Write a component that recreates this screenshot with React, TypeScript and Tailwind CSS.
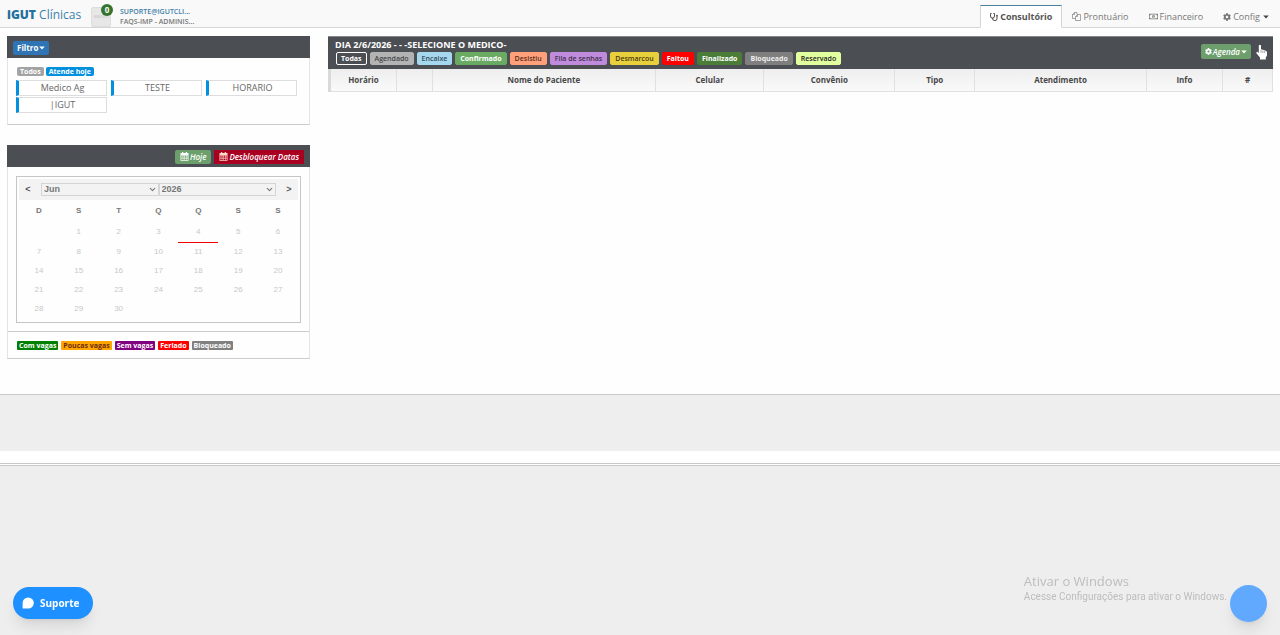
import React from "react";
import { ChevronDown } from "lucide-react";
import { FaCog, FaRegMoneyBillAlt, FaStethoscope } from "react-icons/fa";

const doctors = ["Medico Ag", "TESTE", "HORARIO", "|IGUT"];

const statuses = [
  { label: "Todas", style: "border-white bg-[#4b4e53] font-bold text-white" },
  { label: "Agendado", style: "border-[#b3b3b3] bg-[#b3b3b3] font-semibold text-[#444]" },
  { label: "Encaixe", style: "border-[#a5d8ee] bg-[#a5d8ee] font-semibold text-[#34495e]" },
  { label: "Confirmado", style: "border-[#6aab64] bg-[#6aab64] font-bold text-white" },
  { label: "Desistiu", style: "border-[#ffa07a] bg-[#ffa07a] font-semibold text-[#5a2d1a]" },
  { label: "Fila de senhas", style: "border-[#c08bdc] bg-[#c08bdc] font-semibold text-[#40304a]" },
  { label: "Desmarcou", style: "border-[#e8d03c] bg-[#e8d03c] font-semibold text-[#4a3a10]" },
  { label: "Faltou", style: "border-[#ff0000] bg-[#ff0000] font-bold text-white" },
  { label: "Finalizado", style: "border-[#4b7d38] bg-[#4b7d38] font-bold text-white" },
  { label: "Bloqueado", style: "border-[#7f7f7f] bg-[#7f7f7f] font-bold text-[#eee]" },
  { label: "Reservado", style: "border-[#e2ff9f] bg-[#e2ff9f] font-semibold text-[#222]" },
];

const columns = [
  { label: "Horário", width: "w-[7%]" },
  { label: "", width: "w-[3.8%]" },
  { label: "Nome do Paciente", width: "w-[23.7%]" },
  { label: "Celular", width: "w-[11.5%]" },
  { label: "Convênio", width: "w-[13.9%]" },
  { label: "Tipo", width: "w-[8.5%]" },
  { label: "Atendimento", width: "w-[18.2%]" },
  { label: "Info", width: "w-[8.1%]" },
  { label: "#", width: "w-[5.3%]" },
];

const legend = [
  { label: "Com vagas", style: "bg-[#008000] text-white" },
  { label: "Poucas vagas", style: "bg-[#ffa500] text-[#6b2a10]" },
  { label: "Sem vagas", style: "bg-[#800080] text-white" },
  { label: "Feriado", style: "bg-[#ff0000] text-white" },
  { label: "Bloqueado", style: "bg-[#808080] text-white" },
];

const weekdays = ["D", "S", "T", "Q", "Q", "S", "S"];
const weeks = [0, 1, 2, 3, 4].map((week) =>
  weekdays.map((_, day) => {
    const date = week * 7 + day;
    return date >= 1 && date <= 30 ? date : null;
  }),
);

function Caret({ className = "" }: { className?: string }) {
  return (
    <svg viewBox="0 0 6 4" className={`h-1 w-[6px] ${className}`} fill="currentColor" aria-hidden="true">
      <path d="M.2.5h5.6L3 3.6Z" />
    </svg>
  );
}

function CalendarIcon({ className = "" }: { className?: string }) {
  return (
    <svg viewBox="0 0 18 18" className={`h-[9px] w-[9px] ${className}`} fill="currentColor" aria-hidden="true">
      <path
        fillRule="evenodd"
        d="M4 0h2.5v2h5V0H14v2h3v15.500H1V2h3ZM2.500 7v2.500h3V7Zm4 0v2.500h2.200V7Zm3.200 0v2.500H12V7Zm3.300 0v2.500h2.500V7ZM2.500 10.500V13h3v-2.500Zm4 0V13h2.200v-2.500Zm3.200 0V13H12v-2.500Zm3.300 0V13h2.500v-2.500ZM2.500 14v2h3v-2Zm4 0v2h2.200v-2Zm3.200 0v2H12v-2Zm3.300 0v2h2.500v-2Z"
      />
    </svg>
  );
}

function FilesIcon() {
  return (
    <svg
      viewBox="0 0 18 18"
      className="h-[9px] w-[9px]"
      fill="none"
      stroke="currentColor"
      strokeWidth="1.3"
      strokeLinejoin="round"
      aria-hidden="true"
    >
      <path d="M7 13H1V5l4-4h5v4M5 1v4H1" />
      <path d="M11 5h6v12H7V9ZM11 5v4H7" />
    </svg>
  );
}

function Header() {
  return (
    <header className="flex h-7 justify-between border-b border-[#d5d5d5] bg-[#f9f9f9]">
      <div className="flex pl-[7px]">
        <a href="#inicio" className="mt-1 w-[84px] text-[12px] leading-[22px] whitespace-nowrap text-[#3d81ad]">
          <b className="font-extrabold text-[#24709f]">iGUT</b> Clínicas
        </a>
        <div className="relative mt-[7px] h-5 w-5 rounded-xs border border-[#ddd] bg-[#e7e7e7] text-center text-[3px] leading-[18px] text-[#bbb]">
          SEM FOTO
          <span className="absolute -top-1 -right-[3px] flex h-3 w-3 items-center justify-center rounded-full bg-[#35742d] text-[8px] leading-none font-bold text-white">
            0
          </span>
        </div>
        <div className="mt-[7px] ml-[9px] text-[7px] leading-[10px] font-semibold">
          <div className="text-[#3f7ea8]">SUPORTE@IGUTCLI...</div>
          <div className="text-[#777]">FAQS-IMP - ADMINIS...</div>
        </div>
      </div>
      <nav className="flex items-start pt-[5px] text-[9px] leading-[22px] text-[#777]">
        <a
          href="#consultorio"
          className="flex h-[23px] items-center gap-[2px] border border-t-[#4c7f9e] border-r-[#d5d5d5] border-b-white border-l-[#d5d5d5] bg-white px-[9px] font-bold text-[#555]"
        >
          <FaStethoscope className="h-2 w-2" />
          Consultório
        </a>
        <a href="#prontuario" className="flex h-[23px] items-center gap-[2px] pl-[10px]">
          <FilesIcon />
          Prontuário
        </a>
        <a href="#financeiro" className="flex h-[23px] items-center gap-[2px] pl-5">
          <FaRegMoneyBillAlt className="h-[9px] w-[9px]" />
          Financeiro
        </a>
        <a href="#config" className="flex h-[23px] items-center gap-[2px] pr-[11px] pl-5">
          <FaCog className="h-2 w-2" />
          Config
          <Caret className="ml-px text-[#444]" />
        </a>
      </nav>
    </header>
  );
}

function FilterPanel() {
  return (
    <section className="border border-t-0 border-[#e4e4e4] border-b-[#ccc]">
      <div className="-mx-px flex h-[22px] items-center bg-[#4b4e53] pt-[2px] pl-[6px]">
        <button className="flex h-[14px] items-center gap-px rounded-xs bg-[#2f74b5] px-1 text-[8px] font-bold text-white">
          Filtro
          <Caret />
        </button>
      </div>
      <div className="px-2 pt-[9px] pb-[11px]">
        <div className="flex gap-[2px] pl-px text-[7px] leading-[9px] font-bold text-white">
          <button className="rounded-xs bg-[#a3a3a3] px-[3px]">Todos</button>
          <button className="rounded-xs bg-[#0090dd] px-[3px]">Atende hoje</button>
        </div>
        <div className="mt-[4px] grid grid-cols-3 gap-x-1 gap-y-px pr-1">
          {doctors.map((name) => (
            <button
              key={name}
              className="h-4 border border-l-3 border-[#ddd] border-l-[#0090dd] bg-white text-[9px] leading-[14px] text-[#666]"
            >
              {name}
            </button>
          ))}
        </div>
      </div>
    </section>
  );
}

function MonthSelect({ label, value }: { label: string; value: string }) {
  return (
    <div className="relative min-w-0 flex-1">
      <select
        aria-label={label}
        defaultValue={value}
        className="block h-[13px] w-full appearance-none border border-[#d5d5d5] bg-[#f3f3f3] px-[2px] leading-[11px]"
      >
        <option>{value}</option>
      </select>
      <ChevronDown className="pointer-events-none absolute top-[2px] right-[2px] h-[9px] w-[9px]" strokeWidth={3} />
    </div>
  );
}

function CalendarPanel() {
  return (
    <section className="border border-t-0 border-[#e4e4e4] border-b-[#ccc]">
      <div className="-mx-px flex h-[22px] items-center justify-end gap-[3px] bg-[#4b4e53] pt-px pr-[6px] text-[8px] font-semibold text-white italic">
        <button className="flex h-[14px] items-center gap-px rounded-xs bg-[#6c9f6c] px-[5px]">
          <CalendarIcon />
          Hoje
        </button>
        <button className="flex h-[14px] items-center gap-px bg-[#a90022] px-[5px]">
          <CalendarIcon className="text-[#ffd9c4]" />
          Desbloquear Datas
        </button>
      </div>
      <div className="px-2 pt-[9px] pb-2 font-['Liberation_Sans',sans-serif]">
        <div className="border border-[#c5c5c5] px-[2px] pt-[2px] pb-1">
          <div className="flex h-[21px] items-center bg-[#f3f3f3] text-[9px] font-bold text-[#777]">
            <button className="w-[22px] pr-1 text-[#555]" aria-label="Mês anterior">
              &lt;
            </button>
            <MonthSelect label="Mês" value="Jun" />
            <MonthSelect label="Ano" value="2026" />
            <button className="w-[22px] pl-1 text-[#555]" aria-label="Próximo mês">
              &gt;
            </button>
          </div>
          <table className="w-full table-fixed border-collapse text-center text-[8px]">
            <thead>
              <tr className="h-[22px] text-[#777]">
                {weekdays.map((day, i) => (
                  <th key={i} className="p-0 font-bold">
                    {day}
                  </th>
                ))}
              </tr>
            </thead>
            <tbody>
              {weeks.map((week, i) => (
                <tr key={i} className="text-[#c8c8c8]">
                  {week.map((date, j) => (
                    <td
                      key={j}
                      className={
                        date === 4
                          ? "h-5 border-b border-[#f00000] p-0"
                          : i === 0
                            ? "h-5 p-0"
                            : "h-[19px] p-0"
                      }
                    >
                      {date}
                    </td>
                  ))}
                </tr>
              ))}
            </tbody>
          </table>
        </div>
      </div>
      <div className="flex gap-[3px] border-t border-[#ccc] px-[9px] pt-[9px] pb-2 text-[7px] leading-[9px] font-bold">
        {legend.map((item) => (
          <span key={item.label} className={`rounded-[1px] px-[2px] ${item.style}`}>
            {item.label}
          </span>
        ))}
      </div>
    </section>
  );
}

function Schedule() {
  return (
    <section className="min-w-0">
      <div className="flex h-[33px] justify-between border-t border-[#888] bg-[#4b4e53]">
        <div className="pt-px pl-[7px]">
          <h1 className="text-[9px] leading-[13px] font-bold text-white">DIA 2/6/2026 - - -SELECIONE O MEDICO-</h1>
          <div className="mt-px flex gap-[3px] pl-px">
            {statuses.map((status) => (
              <button
                key={status.label}
                className={`h-[13px] rounded-xs border px-1 text-[7px] leading-[10px] whitespace-nowrap ${status.style}`}
              >
                {status.label}
              </button>
            ))}
          </div>
        </div>
        <div className="flex gap-[5px] pt-[7px] pr-[6px]">
          <button className="flex h-[15px] items-center gap-px rounded-xs bg-[#6c9f6c] px-1 text-[8px] font-semibold text-white italic">
            <FaCog className="h-[7px] w-[7px]" />
            Agenda
            <Caret />
          </button>
          <svg viewBox="0 0 11 16" className="h-4 w-[11px]" aria-hidden="true">
            <path
              d="M2.800 1.500Q3.900 0 5 1.500V5.500q1-.6 1.700.4q1-.5 1.600.5q1-.3 1.400.6Q11 7 11 8.300V11.500L9.800 13.500V15.600H4V13.600L.4 9.200Q.3 7.600 1.700 7.900L2.800 9Z"
              fill="#fff"
            />
            <path d="M5 6v3M6.900 6.500V9M8.700 7v2" stroke="#555" strokeWidth=".5" />
          </svg>
        </div>
      </div>
      <table className="w-full table-fixed border-separate border-spacing-0 border-l-[3px] border-[#d9d9d9] text-[8px] text-[#484848]">
        <thead>
          <tr className="h-[23px] bg-linear-to-b from-[#eeeeee] to-[#fafafa]">
            {columns.map((column, i) => (
              <th key={i} className={`border-r border-b border-[#e0e0e0] p-0 font-bold ${column.width}`}>
                {column.label}
              </th>
            ))}
          </tr>
        </thead>
      </table>
    </section>
  );
}

export default function App() {
  return (
    <div className="flex min-h-screen flex-col bg-[#eeeeee] font-['Open_Sans',sans-serif]">
      <Header />
      <main className="grid grid-cols-[303px_minmax(0,1fr)] gap-[18px] border-b border-[#c8c8c8] bg-[#fefefe] px-[7px] pt-2 pb-[35px]">
        <div className="flex flex-col gap-5">
          <FilterPanel />
          <CalendarPanel />
        </div>
        <Schedule />
      </main>
      <div className="mt-14 h-[15px] border-b border-[#c8c8c8] bg-white">
        <div className="h-[13px] border-b border-[#c8c8c8]" />
      </div>
      <button className="fixed bottom-4 left-[13px] flex h-8 w-20 items-center gap-[6px] rounded-full bg-[#1e90ff] pl-[9px] text-[10px] font-bold text-white shadow-lg">
        <svg viewBox="0 0 12 12" className="h-3 w-3" fill="currentColor" aria-hidden="true">
          <path d="M6.200.4a5.600 5.600 0 1 1 0 11.200H.6V6A5.600 5.600 0 0 1 6.200.4Z" />
        </svg>
        Suporte
      </button>
      <div className="fixed right-[53px] bottom-[31px] text-[#bdbdbd]">
        <div className="text-[13px] leading-[15px]">Ativar o Windows</div>
        <div className="font-['Roboto',sans-serif] text-[10px] leading-[15px]">
          Acesse Configurações para ativar o Windows.
        </div>
      </div>
      <button
        aria-label="Abrir chat"
        className="fixed right-[13px] bottom-[13px] h-[37px] w-[37px] rounded-full bg-[#61a8ff] shadow-lg"
      />
    </div>
  );
}
